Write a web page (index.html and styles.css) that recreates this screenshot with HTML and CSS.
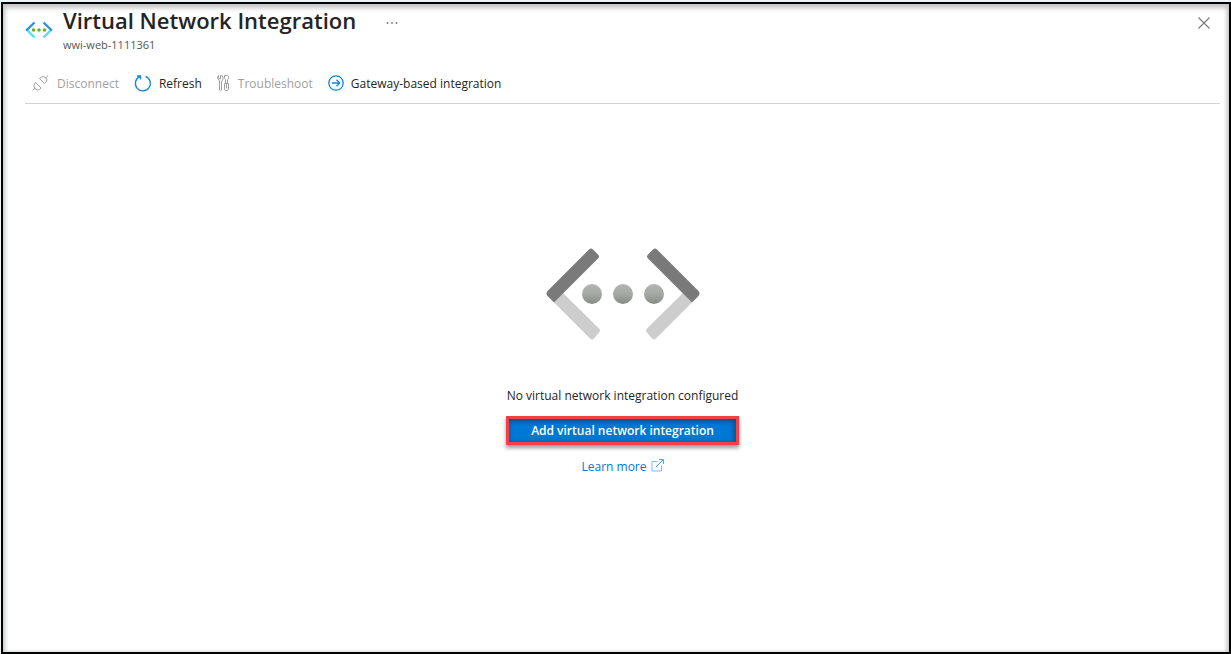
FILE: index.html
```html
<!DOCTYPE html>
<html lang="en">
<head>
<meta charset="utf-8">
<title>Virtual Network Integration</title>
<link rel="stylesheet" href="styles.css">
</head>
<body>
<div class="frame">
  <header class="header">
    <svg class="logo" viewBox="0 0 28 18" aria-hidden="true">
      <g fill="none" stroke-width="2.4">
        <path class="logo-bottom" d="M1.500 8.500 9.500 16.500M26.500 8.500 18.500 16.500"/>
        <path class="logo-top" d="M1.200 9.500 9.500 1.500M26.800 9.500 18.500 1.500"/>
      </g>
      <g class="logo-dots"><circle cx="8.500" cy="9" r="1.800"/><circle cx="14" cy="9" r="1.800"/><circle cx="19.500" cy="9" r="1.800"/></g>
    </svg>
    <div class="titles">
      <h1 class="title">Virtual Network Integration</h1>
      <p class="subtitle">wwi-web-1111361</p>
    </div>
    <button class="icon-button more" type="button" aria-label="More">
      <svg width="12" height="4" viewBox="0 0 12 4" fill="#777"><circle cx="1.500" cy="2" r=".9"/><circle cx="6" cy="2" r=".9"/><circle cx="10.500" cy="2" r=".9"/></svg>
    </button>
    <button class="icon-button close" type="button" aria-label="Close">
      <svg width="12" height="12" viewBox="0 0 12 12" fill="none" stroke="#777" stroke-width="1.100"><path d="M.5.5 11.500 11.500M11.500.5.5 11.500"/></svg>
    </button>
  </header>
  <nav class="toolbar" aria-label="Commands">
    <button class="command" type="button" disabled>
      <svg width="18" height="18" viewBox="0 0 18 18" fill="none" stroke="currentColor"><path d="M.8 15.500 3.500 12.800M3.500 7.500 9 13 7.500 14.500Q5.500 16 3.200 13.800 1 11.500 2.300 9ZM7.500 3.500 12.500 8.500 14.200 7Q16 5 13.800 2.800 11.500.8 9.200 2.200ZM13.800 2.800 16.200.5"/></svg>
      <span>Disconnect</span>
    </button>
    <button class="command" type="button">
      <svg class="blue" width="18" height="18" viewBox="0 0 18 18" fill="none" stroke="currentColor" stroke-width="1.300"><path d="M11.500 1.400A7.500 7.500 0 1 1 5.600 1.700M3 1H6.500V4.500"/></svg>
      <span>Refresh</span>
    </button>
    <button class="command" type="button" disabled>
      <svg width="14" height="18" viewBox="0 0 14 18" fill="none" stroke="currentColor"><path d="M3.500.5V4H2.500L1.500 3V.5Q.5 1.500.7 3.500L2.500 6V15Q3.500 16.500 4.500 15V6.500Q6.500 5 6 2.500L5 .5H3.500M7.500.5H10.500Q12 1.500 11.500 3.500L10.500 4.500V8.500M7.500.5V3.500L8.500 4.500V8.500M7.500 8.500H11.500V14.500Q11 15.500 10 15.500H9Q7.500 15.500 7.500 14.500ZM9.500 9V13.500"/></svg>
      <span>Troubleshoot</span>
    </button>
    <button class="command" type="button">
      <svg class="blue gateway" width="16" height="18" viewBox="0 0 16 18" fill="none" stroke="currentColor" stroke-width="1.300"><circle cx="8" cy="8" r="7.200"/><path d="M4 8H11.500M8.500 4.800 11.700 8 8.500 11.200"/></svg>
      <span>Gateway-based integration</span>
    </button>
  </nav>
  <main class="empty">
    <svg class="art" width="154" height="94" viewBox="0 0 154 94" aria-hidden="true">
      <defs><linearGradient id="dot" x2="0" y2="1"><stop offset="0" stop-color="#b3b6b3"/><stop offset=".5" stop-color="#a5a8a5"/><stop offset="1" stop-color="#868986"/></linearGradient></defs>
      <g id="bracket">
        <path fill="#cdcdcd" d="M8 55.500 17 46 53 81.500Q55 83.500 53 85.500L48 91.500Q46 93.500 44 91.500Z"/>
        <path fill="#7a7a7a" d="M8 55.500 1.500 49Q-.5 46.500 1.500 44L43 2.500Q45 .5 47 2.500L52 7.500Q54 9.500 52 11.500Z"/>
      </g>
      <use href="#bracket" transform="matrix(-1 0 0 1 154 0)"/>
      <g fill="url(#dot)"><circle cx="46" cy="47" r="10"/><circle cx="77" cy="47" r="10"/><circle cx="108" cy="47" r="10"/></g>
    </svg>
    <p class="message">No virtual network integration configured</p>
    <button class="primary" type="button">Add virtual network integration</button>
    <a class="learn" href="#">Learn more
      <svg width="13" height="13" viewBox="0 0 13 13" fill="none" stroke="#3b9ae5"><path d="M6.500 2.500H1V12H10.500V6.500" opacity=".65"/><path d="M5 8 12 1M8 .6H12.400V5"/></svg>
    </a>
  </main>
</div>
</body>
</html>
```
FILE: styles.css
```css
* { box-sizing: border-box; }

body {
  margin: 0;
  padding: 2px 0 0 1px;
  min-height: 100vh;
  display: flex;
  background: #eef3f5;
  color: #252423;
  font: 12px/16px "Open Sans", "Noto Sans", sans-serif;
}

button {
  font: inherit;
  color: inherit;
  border: 0;
  background: none;
  padding: 0;
}

h1, p { margin: 0; }
svg { flex: none; }

.frame {
  flex: 1;
  display: flex;
  flex-direction: column;
  padding: 2px 9px 0 22px;
  border: 2px solid #000;
  background: #fff;
  box-shadow: inset 0 4px 5px #c4c4c4, inset 3px 0 4px -1px #d0d0d0, inset -3px 0 4px -1px #c8c8c8;
}

.header {
  display: flex;
  align-items: flex-start;
}

.logo {
  width: 28px;
  height: 18px;
  margin: 15px 10px 0 0;
}

.logo-top { stroke: #2492e6; }
.logo-bottom { stroke: #50dff5; }
.logo-dots { fill: #6cad25; }

.title {
  font-size: 22px;
  line-height: 28px;
  font-weight: 600;
}

.subtitle {
  font-size: 11px;
  line-height: 16px;
  margin-top: 3px;
  color: #555;
}

.icon-button {
  display: flex;
  padding: 4px;
}

.more { margin: 11px 0 0 26px; }
.close { margin: 7px 6px 0 auto; }

.toolbar {
  display: flex;
  align-items: center;
  gap: 15px;
  height: 40px;
  margin-top: 11px;
  padding-left: 7px;
  border-bottom: 1px solid #d2d2d2;
}

.command {
  display: flex;
  align-items: center;
  gap: 7px;
}

.command:disabled { color: #a19f9d; }
.blue { color: #0f86e0; }

.empty {
  display: flex;
  flex-direction: column;
  align-items: center;
  padding: 143px 0 24px;
}

.message { margin-top: 47px; }

.primary {
  height: 29px;
  margin-top: 12px;
  padding: 0 22px;
  border: 3px solid #f73e43;
  background: #0078d4;
  color: #fff;
  font-weight: 600;
  box-shadow: 0 3px 4px #999, inset 0 3px 4px #005795, inset -3px 0 4px #005fa5;
}

.learn {
  display: flex;
  align-items: flex-start;
  gap: 4px;
  margin-top: 14px;
  color: #0078d4;
  text-decoration: none;
}
```
